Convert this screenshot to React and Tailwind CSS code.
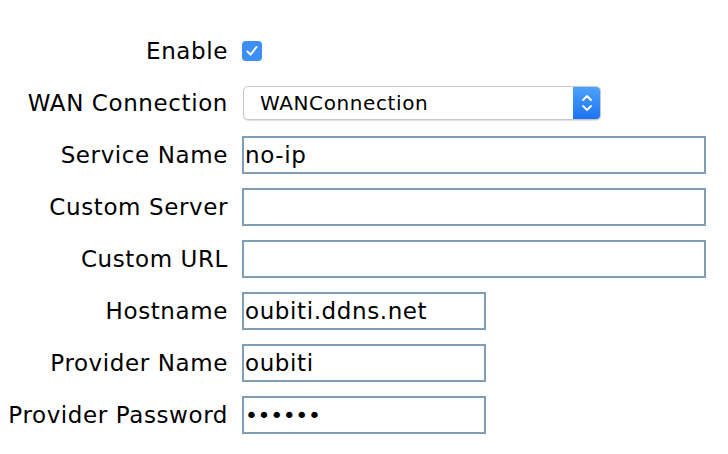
import React from "react";

const font = { fontFamily: '"DejaVu Sans", Verdana, sans-serif' };

function Label({ children }) {
  return (
    <div className="flex h-[52px] items-center justify-end pr-[14px] text-[23px] tracking-[0.6px] text-black">
      {children}
    </div>
  );
}

function TextBox({ value, wide, type = "text" }) {
  return (
    <div className="flex h-[52px] items-center">
      <input
        type={type}
        readOnly
        defaultValue={value}
        className={`${wide ? "w-[464px]" : "w-[244px]"} ${type === "password" ? "tracking-[-0.4px] text-[22px]" : "tracking-[0.6px] text-[23px]"} h-[38px] border-2 border-[#7f9db6] bg-white pl-[1px] text-black outline-none`}
        style={font}
      />
    </div>
  );
}

export default function App() {
  return (
    <div className="h-[454px] w-[728px] bg-white" style={font}>
      <div className="grid grid-cols-[242px_1fr] pt-[25px]">
        <Label>Enable</Label>
        <div className="flex h-[52px] items-center">
          <div className="flex h-[20px] w-[20px] items-center justify-center rounded-[4px] bg-[#3d8ff6]">
            <svg width="14" height="14" viewBox="0 0 14 14">
              <path d="M2.5 7.5 L5.6 10.6 L11.5 3" stroke="white" strokeWidth="2" fill="none" strokeLinecap="round" strokeLinejoin="round" />
            </svg>
          </div>
        </div>

        <Label>WAN Connection</Label>
        <div className="flex h-[52px] items-center">
          <div className="flex h-[34px] w-[358px] ml-[1px] items-stretch overflow-hidden rounded-[5px] border border-[#c8c8c8] bg-white shadow-[0_1px_1px_rgba(0,0,0,0.12)]">
            <div className="flex flex-1 items-center pl-[16px] text-[20px] tracking-[0.6px] text-black">WANConnection</div>
            <div className="flex w-[27px] items-center justify-center bg-gradient-to-b from-[#4ea2fb] to-[#1a73f0]">
              <svg width="12" height="22" viewBox="0 0 12 22">
                <path d="M2 8 L6 4 L10 8" stroke="white" strokeWidth="1.8" fill="none" strokeLinecap="round" strokeLinejoin="round" />
                <path d="M2 14 L6 18 L10 14" stroke="white" strokeWidth="1.8" fill="none" strokeLinecap="round" strokeLinejoin="round" />
              </svg>
            </div>
          </div>
        </div>

        <Label>Service Name</Label>
        <TextBox value="no-ip" wide />

        <Label>Custom Server</Label>
        <TextBox value="" wide />

        <Label>Custom URL</Label>
        <TextBox value="" wide />

        <Label>Hostname</Label>
        <TextBox value="oubiti.ddns.net" />

        <Label>Provider Name</Label>
        <TextBox value="oubiti" />

        <Label>Provider Password</Label>
        <TextBox value="oubiti" type="password" />
      </div>
    </div>
  );
}
